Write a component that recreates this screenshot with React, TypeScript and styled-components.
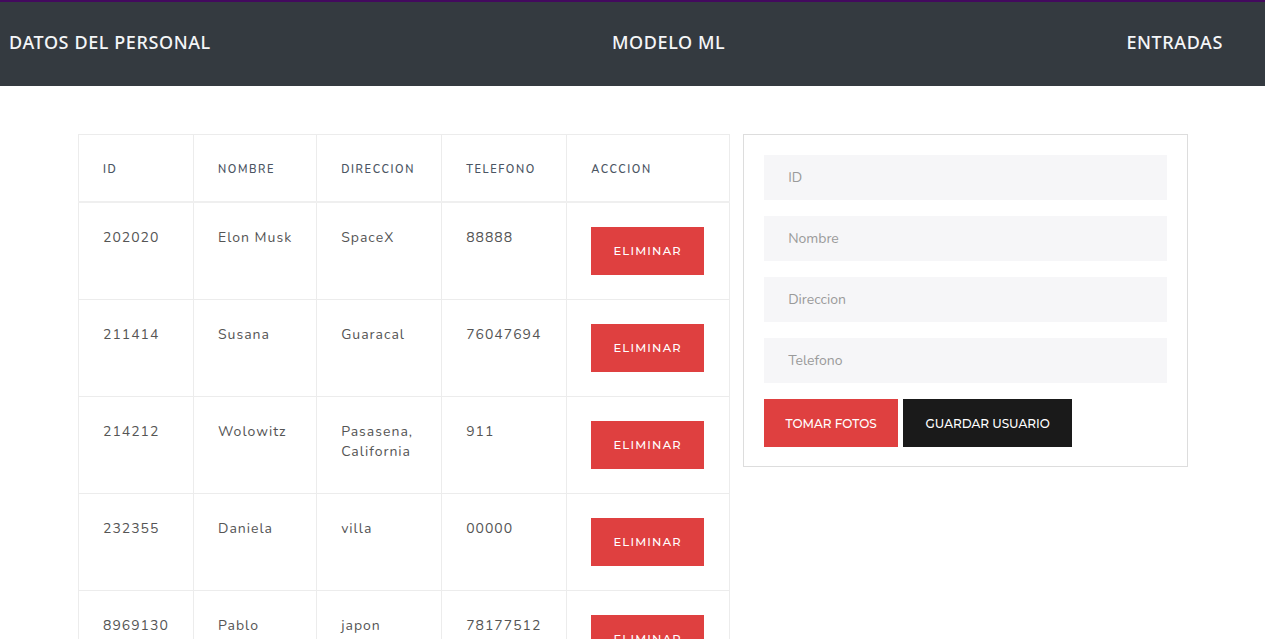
import React from "react";
import styled, { createGlobalStyle } from "styled-components";

const Global = createGlobalStyle`
  html, body { margin: 0; padding: 0; background: #fff; }
  body { font-family: "Nunito", "Open Sans", "Noto Sans", sans-serif; }
  * { box-sizing: border-box; }
`;

const Page = styled.div`
  width: 1265px;
  height: 639px;
  overflow: hidden;
`;

const TopLine = styled.div`
  height: 2px;
  background: #43095e;
`;

const Nav = styled.nav`
  height: 84px;
  background: #343a40;
  display: flex;
  align-items: center;
  justify-content: space-between;
  padding: 0 42px 0 9px;
`;

const NavItem = styled.a`
  color: #f4f6f8;
  font-family: "Noto Sans", sans-serif;
  font-size: 18px;
  font-weight: 500;
  letter-spacing: 0.6px;
  text-decoration: none;
  margin-top: -4px;
`;

const Main = styled.main`
  display: flex;
  align-items: flex-start;
  gap: 13px;
  padding: 48px 0 0 78px;
`;

const Table = styled.table`
  border-collapse: collapse;
  border: 1px solid #ececec;
  font-family: "Nunito", "Open Sans", sans-serif;
`;

const Th = styled.th<{ $w: number }>`
  width: ${(p) => p.$w}px;
  height: 67px;
  padding: 4px 24px 0;
  text-align: left;
  font-size: 11px;
  font-weight: 600;
  letter-spacing: 1.6px;
  color: #4b5563;
  border-right: 1px solid #ececec;
  border-bottom: 2px solid #efefef;
  vertical-align: middle;
`;

const Td = styled.td`
  padding: 24px;
  height: 97px;
  vertical-align: top;
  font-size: 14px;
  line-height: 20px;
  letter-spacing: 1px;
  color: #555;
  border-right: 1px solid #ececec;
  border-bottom: 1px solid #ececec;
`;

const TdText = styled.div<{ $wrap?: boolean }>`
  padding-top: 1px;
  white-space: ${(p) => (p.$wrap ? "normal" : "nowrap")};
`;

const DeleteBtn = styled.button`
  width: 113px;
  height: 48px;
  border: none;
  background: #df4040;
  color: #fff;
  font-family: "Montserrat", "Open Sans", sans-serif;
  font-size: 11.5px;
  font-weight: 500;
  letter-spacing: 1.2px;
  cursor: pointer;
`;

const Card = styled.form`
  width: 445px;
  border: 1px solid #dddddd;
  padding: 20px 20px 19px 20px;
  display: flex;
  flex-direction: column;
  gap: 16px;
`;

const Input = styled.input`
  width: 403px;
  height: 45px;
  border: none;
  background: #f6f6f8;
  padding: 0 24px;
  font-family: "Nunito", "Open Sans", sans-serif;
  font-size: 14px;
  color: #333;
  outline: none;
  &::placeholder { color: #9a9a9a; }
`;

const BtnRow = styled.div`
  display: flex;
  gap: 5px;
`;

const ActionBtn = styled.button<{ $dark?: boolean; $w: number }>`
  width: ${(p) => p.$w}px;
  height: 48px;
  border: none;
  background: ${(p) => (p.$dark ? "#1a1a1a" : "#df4040")};
  color: #fff;
  font-family: "Montserrat", "Open Sans", sans-serif;
  font-size: 12px;
  font-weight: 500;
  letter-spacing: 0px;
  cursor: pointer;
`;

const cols = [
  { label: "ID", w: 115 },
  { label: "NOMBRE", w: 123 },
  { label: "DIRECCION", w: 125 },
  { label: "TELEFONO", w: 125 },
  { label: "ACCCION", w: 163 },
];

const rows = [
  ["202020", "Elon Musk", "SpaceX", "88888"],
  ["211414", "Susana", "Guaracal", "76047694"],
  ["214212", "Wolowitz", "Pasasena, California", "911"],
  ["232355", "Daniela", "villa", "00000"],
  ["8969130", "Pablo", "japon", "78177512"],
];

export default function App() {
  return (
    <Page>
      <Global />
      <TopLine />
      <Nav>
        <NavItem href="#">DATOS DEL PERSONAL</NavItem>
        <NavItem href="#">MODELO ML</NavItem>
        <NavItem href="#">ENTRADAS</NavItem>
      </Nav>
      <Main>
        <Table>
          <thead>
            <tr>
              {cols.map((c) => (
                <Th key={c.label} $w={c.w}>
                  {c.label}
                </Th>
              ))}
            </tr>
          </thead>
          <tbody>
            {rows.map((r) => (
              <tr key={r[0]}>
                {r.map((v, i) => (
                  <Td key={i}>
                    <TdText $wrap={i === 2}>{v}</TdText>
                  </Td>
                ))}
                <Td>
                  <DeleteBtn type="button">ELIMINAR</DeleteBtn>
                </Td>
              </tr>
            ))}
          </tbody>
        </Table>
        <Card onSubmit={(e) => e.preventDefault()}>
          <Input placeholder="ID" />
          <Input placeholder="Nombre" />
          <Input placeholder="Direccion" />
          <Input placeholder="Telefono" />
          <BtnRow>
            <ActionBtn type="button" $w={134}>
              TOMAR FOTOS
            </ActionBtn>
            <ActionBtn type="button" $dark $w={169}>
              GUARDAR USUARIO
            </ActionBtn>
          </BtnRow>
        </Card>
      </Main>
    </Page>
  );
}
